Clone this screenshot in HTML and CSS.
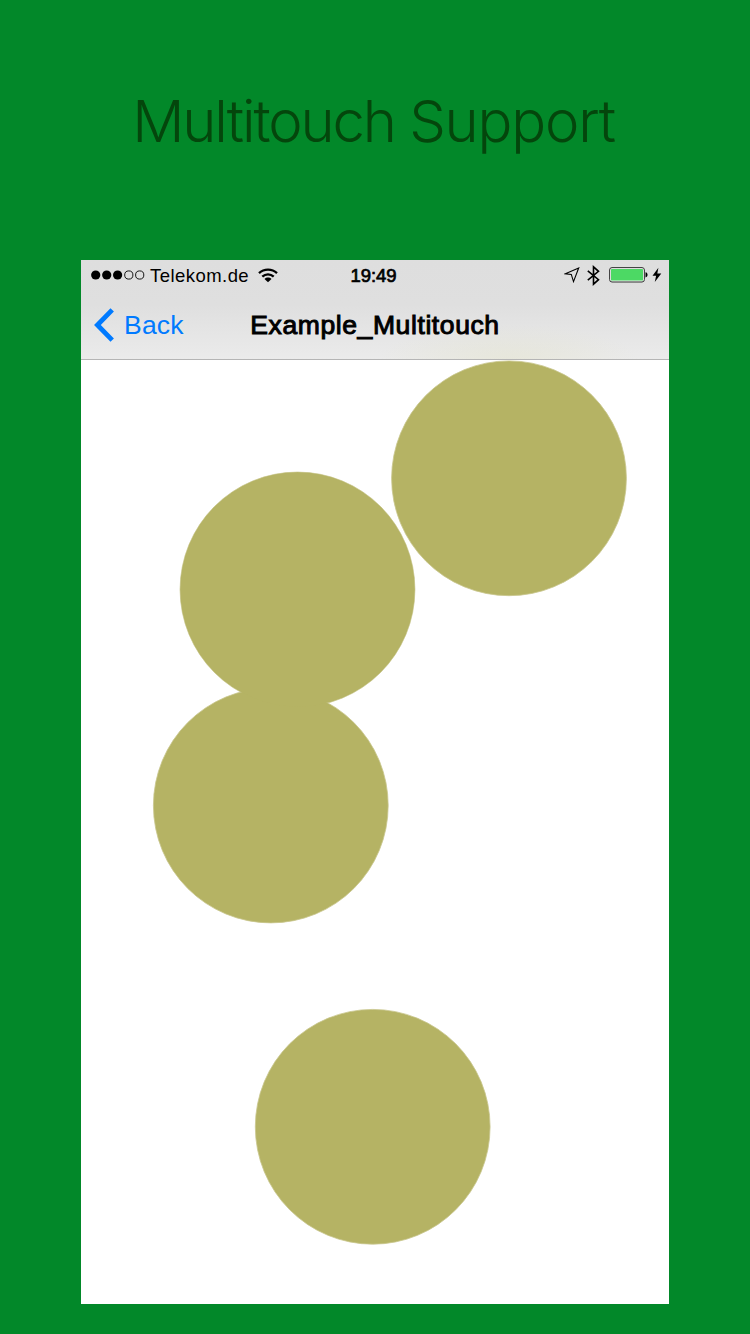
FILE: index.html
```html
<!DOCTYPE html>
<html lang="en">
<head>
<meta charset="utf-8">
<title>Multitouch Support</title>
<link rel="stylesheet" href="styles.css">
</head>
<body>
<h1 class="headline">Multitouch <span class="wide">Support</span></h1>
<main class="phone">
  <header class="topbar">
    <div class="status">
      <div class="status-left">
        <svg class="signal" width="54" height="10" viewBox="0 0 54 10">
          <circle cx="4.7" cy="5" r="4.6"/><circle cx="15.7" cy="5" r="4.6"/><circle cx="26.6" cy="5" r="4.6"/>
          <g fill="none" stroke="#000" stroke-width=".9"><circle cx="37.8" cy="5" r="4.1"/><circle cx="48.7" cy="5" r="4.1"/></g>
        </svg>
        <span class="carrier">Telekom.de</span>
        <svg class="wifi" width="20" height="15" viewBox="0 0 20 15">
          <g fill="none" stroke="#000" stroke-width="2.3"><path d="M1 5.2C6 .4 14 .4 19 5.2"/><path d="M4.3 8.7C7.6 5.6 12.4 5.6 15.7 8.7"/></g>
          <path d="M6.5 10.9C8.5 9 11.5 9 13.5 10.9L10 14.2Z"/>
        </svg>
      </div>
      <span class="clock">19:49</span>
      <div class="status-right">
        <svg width="16" height="16" viewBox="0 0 16 16" fill="none" stroke="#000" stroke-width="1.1"><path d="M14.7 1L1.3 6.8L7.3 7.4L9.5 14.6Z"/></svg>
        <svg class="bluetooth" width="13" height="21" viewBox="0 0 13 21" fill="none" stroke="#000" stroke-width="1.6"><path d="M.8 5.8L11.5 14.7L6.5 19.2V1.8L11.5 6.3L.8 15.2"/></svg>
        <svg class="battery" width="39" height="16" viewBox="0 0 39 16">
          <rect x=".6" y=".6" width="34.8" height="14.4" rx="2.4" fill="#eee" stroke="#333" stroke-width="1"/>
          <rect x="2" y="2" width="32" height="11.6" rx=".7" fill="#4cd964"/>
          <path d="M36.5 5.2C39.2 5.3 39.2 10.3 36.5 10.4Z"/>
        </svg>
        <svg class="bolt" width="10" height="16" viewBox="0 0 10 16"><path d="M6.4.8L.5 8.7H4.1L2.8 14.9L9.3 6.5H5.3Z"/></svg>
      </div>
    </div>
    <nav class="navbar">
      <a class="back"><svg width="20" height="34" viewBox="0 0 20 34" fill="none" stroke="#007aff" stroke-width="4.8"><path d="M18.2 1.8L3.4 17L18.2 32.2"/></svg><span>Back</span></a>
      <h2 class="title">Example_Multitouch</h2>
    </nav>
  </header>
  <svg class="canvas" width="588" height="944" viewBox="81 360 588 944" fill="#b5b364" stroke="#c9c78e" stroke-width=".8">
    <circle cx="509" cy="478.3" r="117.4"/>
    <circle cx="297.5" cy="589.5" r="117.4"/>
    <circle cx="270.8" cy="805.5" r="117.4"/>
    <circle cx="297.5" cy="589.5" r="117" stroke="none"/>
    <circle cx="372.7" cy="1126.8" r="117.4"/>
  </svg>
</main>
</body>
</html>
```
FILE: styles.css
```css
body {
  margin: 0;
  height: 1334px;
  background: #028829;
  font-family: "Liberation Sans", Arial, sans-serif;
  overflow: hidden;
}
svg { display: block; flex: none; }
.headline {
  margin: 0;
  height: 260px;
  padding: 86px 3px 0 0;
  box-sizing: border-box;
  text-align: center;
  font: 300 58px/70px Inter, sans-serif;
  letter-spacing: -2.1px;
  white-space: nowrap;
  color: #04460c;
}
.wide { letter-spacing: -1.2px; }
.phone {
  width: 588px;
  height: 1044px;
  margin: 0 auto;
  background: #fff;
}
.topbar {
  height: 100px;
  box-sizing: border-box;
  border-bottom: 1px solid #b5b5b5;
  background:
    radial-gradient(ellipse 130px 36px at 428px 100px, rgba(225, 225, 195, .4), transparent),
    linear-gradient(#dedede 0, #dfdfdf 45%, #ebebeb 100%);
}
.status {
  display: grid;
  grid-template-columns: 1fr auto 1fr;
  align-items: center;
  height: 30px;
  padding: 0 7px 0 10px;
  font-size: 18.5px;
  line-height: 28px;
}
.status-left, .status-right { display: flex; align-items: center; height: 30px; }
.carrier { margin-left: 5px; padding-top: 2px; letter-spacing: .45px; }
.wifi { margin-left: 9px; }
.clock { padding: 2px 6px 0 0; -webkit-text-stroke: .7px #000; letter-spacing: -.1px; }
.status-right { justify-content: flex-end; }
.bluetooth { margin-left: 7px; }
.battery { margin-left: 9px; }
.bolt { margin-left: 4px; }
.navbar {
  display: grid;
  grid-template-columns: 1fr auto 1fr;
  align-items: center;
  height: 69px;
  padding: 0 13px;
}
.back {
  display: flex;
  align-items: center;
  gap: 10px;
  font-size: 26.5px;
  line-height: 34px;
  letter-spacing: .2px;
  color: #007aff;
}
.title {
  margin: 0;
  font-size: 26.5px;
  font-weight: 400;
  line-height: 34px;
  letter-spacing: .6px;
  -webkit-text-stroke: 1px #000;
}
```
